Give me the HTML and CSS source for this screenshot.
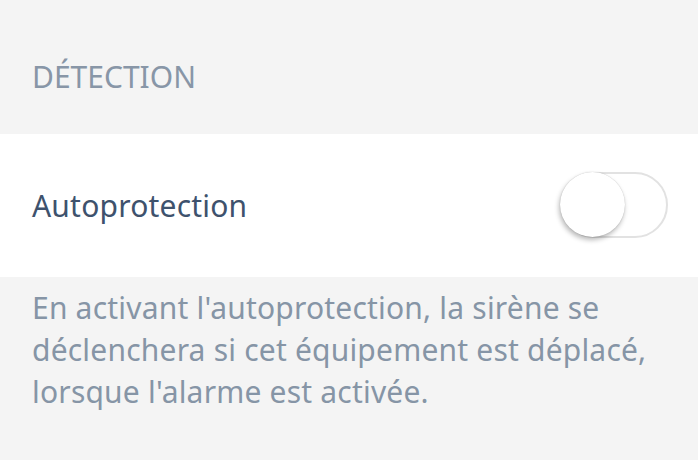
FILE: index.html
```html
<!DOCTYPE html>
<html lang="fr">
<head>
    <meta charset="UTF-8">
    <meta name="viewport" content="width=device-width, initial-scale=1.0">
    <title>Détection</title>
    <link rel="stylesheet" href="styles.css">
</head>
<body>
    <header class="section-title">
        <h2>Détection</h2>
    </header>
    <main>
        <section class="setting-row">
            <span class="setting-label">Autoprotection</span>
            <label class="switch">
                <input type="checkbox">
                <span class="track"></span>
            </label>
        </section>
        <p class="setting-help">En activant l'autoprotection, la sirène se déclenchera si cet équipement est déplacé, lorsque l'alarme est activée.</p>
    </main>
</body>
</html>
```

FILE: styles.css
```css
body {
    font-family: "Noto Sans", "Open Sans", sans-serif;
    font-size: 30px;
    line-height: 42px;
    margin: 0;
    padding: 0;
    background: #f4f4f4;
    color: #8695a6;
}

.section-title {
    padding: 56px 32px 36px;
}

.section-title h2 {
    margin: 0;
    font-size: 30px;
    font-weight: normal;
    text-transform: uppercase;
    color: #8896a7;
}

.setting-row {
    display: flex;
    justify-content: space-between;
    align-items: center;
    height: 143px;
    padding: 0 30px 0 32px;
    background: white;
    box-sizing: border-box;
}

.setting-label {
    color: #3e526d;
    letter-spacing: 0.2px;
}

.switch {
    position: relative;
    display: block;
    width: 107px;
    height: 66px;
    margin-top: -2px;
}

.switch input {
    display: none;
}

.switch .track {
    display: block;
    width: 100%;
    height: 100%;
    border: 2px solid #e2e2e2;
    border-radius: 33px;
    box-sizing: border-box;
    background: white;
}

.switch .track::before {
    content: "";
    position: absolute;
    left: -1px;
    top: 0;
    width: 65px;
    height: 65px;
    border-radius: 50%;
    background: white;
    box-shadow: -1px 3px 5px rgba(0, 0, 0, 0.28), 0 0 1px rgba(0, 0, 0, 0.25);
}

.setting-help {
    margin: 0;
    padding: 10px 32px 0;
    color: #8695a6;
    letter-spacing: 0.2px;
}
```
